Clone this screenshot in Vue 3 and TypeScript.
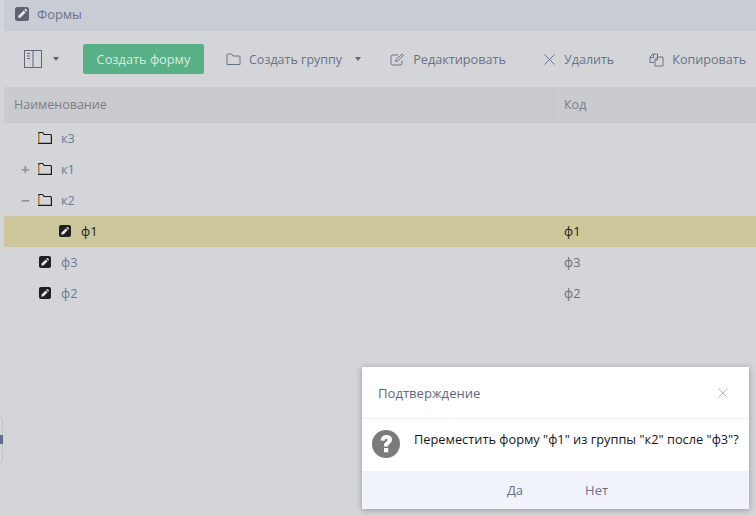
<template>
  <div class="page">
    <header class="title-bar">
      <span class="title-icon">
        <svg width="14" height="14" viewBox="0 0 14 14">
          <rect width="14" height="14" rx="2.500" fill="#5f6475" />
          <path d="M3 11l.6-2.600 5-5 2 2-5 5z" fill="#e4e6ea" />
          <path d="M9.300 2.700l.7-.7q.5-.4 1 0l1 1q.4.500 0 1l-.7.7z" fill="#e4e6ea" />
        </svg>
      </span>
      <span class="title-text">Формы</span>
    </header>

    <div class="toolbar">
      <button class="tool view-btn">
        <svg width="19" height="18" viewBox="0 0 19 18" fill="none" stroke="#60657a">
          <rect x="1.500" y="0.500" width="17" height="17" />
          <path d="M10 0.500v17M4 3.500h3M4 6h3M4 8.500h3" />
        </svg>
      </button>
      <span class="caret view-caret"></span>
      <button class="create-btn">{{ createLabel }}</button>
      <button v-for="item in actions" :key="item.label" class="tool" :class="item.cls">
        <svg width="15" height="15" viewBox="0 0 15 15" fill="none" stroke="#6c7285" stroke-width="1">
          <path v-for="d in item.paths" :key="d" :d="d" />
        </svg>
        <span>{{ item.label }}</span>
        <span v-if="item.caret" class="caret"></span>
      </button>
    </div>

    <div class="table-head">
      <div class="col-name">Наименование</div>
      <div class="col-code">Код</div>
    </div>

    <div class="rows">
      <div v-for="row in rows" :key="row.name" class="row" :class="{ selected: row.selected }">
        <div class="cell-name" :style="{ paddingLeft: row.indent + 'px' }">
          <span class="toggle">{{ row.toggle }}</span>
          <svg v-if="row.folder" class="node-icon" width="14" height="12" viewBox="0 0 14 12" fill="none">
            <path d="M.6 11.400V1.500q0-1 1-1h3l1.500 2h6.300q1 0 1 1v7.900z" stroke="#1a1b20" stroke-width="1.200" />
            <path d="M.6 11V1.500" stroke="#b8813a" stroke-width="1.200" />
          </svg>
          <svg v-else class="node-icon form-icon" width="12" height="12" viewBox="0 0 12 12">
            <rect width="12" height="12" rx="2" fill="#1e1f24" />
            <path d="M2.300 9.700l.5-2.400 3.900-3.900 1.900 1.900-3.900 3.900z" fill="#ece8da" />
            <path d="M7.300 2.800l.7-.6q.4-.3.8 0l1 1q.3.400 0 .8l-.6.7z" fill="#ece8da" />
          </svg>
          <span class="node-name">{{ row.name }}</span>
        </div>
        <div class="cell-code">{{ row.code }}</div>
      </div>
    </div>

    <div class="side-handle"></div>

    <div class="dialog">
      <div class="dialog-head">
        <span>Подтверждение</span>
        <svg width="10" height="10" viewBox="0 0 10 10" stroke="#b6bac4" fill="none">
          <path d="M.5 .5l9 9M9.500 .5l-9 9" />
        </svg>
      </div>
      <div class="dialog-body">
        <svg width="28" height="28" viewBox="0 0 28 28">
          <circle cx="14" cy="14" r="14" fill="#7b7b7b" />
          <path
            d="M8.500 10.500q.6-5.500 5.800-5.500 5.700 0 5.700 4.800 0 2.700-2.600 4.200-1.200.7-1.200 1.700v.8h-4.200v-1.300q0-2.300 2-3.500 1.600-.9 1.600-1.800 0-1.200-1.300-1.200-1.500 0-1.800 2zM12 18h4.200v4.200H12z"
            fill="#fff"
          />
        </svg>
        <span>{{ message }}</span>
      </div>
      <div class="dialog-foot">
        <button class="foot-btn">Да</button>
        <button class="foot-btn">Нет</button>
      </div>
    </div>
  </div>
</template>

<script setup lang="ts">
interface Action {
  label: string;
  cls: string;
  caret?: boolean;
  paths: string[];
}

interface Row {
  name: string;
  code: string;
  indent: number;
  toggle: string;
  folder: boolean;
  selected?: boolean;
}

const createLabel = "Создать форму";
const message = 'Переместить форму "ф1" из группы "к2" после "ф3"?';

const actions: Action[] = [
  {
    label: "Создать группу",
    cls: "a-group",
    caret: true,
    paths: ["M1 12.500V3q0-1 1-1h3.500l1.500 2h6q1 0 1 1v7.500z"],
  },
  {
    label: "Редактировать",
    cls: "a-edit",
    paths: ["M12 8.500v3q0 1.500-1.500 1.500h-8Q1 13 1 11.500v-7Q1 3 2.500 3H8", "M5.500 9.500l.6-2 6-5.500 1.400 1.400-5.900 5.600z"],
  },
  { label: "Удалить", cls: "a-del", paths: ["M2.500 2.500l10 10M12.500 2.500l-10 10"] },
  {
    label: "Копировать",
    cls: "a-copy",
    paths: ["M5 10.500H1V5l3-3h4.500v3", "M6 14V7.500L8.500 5H14v9z", "M4.500 2v3.500H1M8.500 5v3H6"],
  },
];

const rows: Row[] = [
  { name: "к3", code: "", indent: 17, toggle: "", folder: true },
  { name: "к1", code: "", indent: 17, toggle: "+", folder: true },
  { name: "к2", code: "", indent: 17, toggle: "−", folder: true },
  { name: "ф1", code: "ф1", indent: 37, toggle: "", folder: false, selected: true },
  { name: "ф3", code: "ф3", indent: 17, toggle: "", folder: false },
  { name: "ф2", code: "ф2", indent: 17, toggle: "", folder: false },
];
</script>

<style>
html,
body {
  margin: 0;
  background: #d3d5d9;
}
</style>

<style scoped>
.page {
  position: relative;
  width: 756px;
  height: 516px;
  overflow: hidden;
  padding-left: 4px;
  box-sizing: border-box;
  background: #d3d5d9;
  font-family: "Open Sans", "Noto Sans", sans-serif;
  font-size: 12.500px;
  color: #6c7285;
}

button {
  font: inherit;
  color: inherit;
  background: none;
  border: none;
  padding: 0;
}

.title-bar {
  height: 31px;
  box-sizing: border-box;
  display: flex;
  align-items: center;
  padding: 0 0 3px 11px;
  gap: 8px;
  background: #c8ccd5;
  font-size: 12.800px;
}

.title-icon {
  display: flex;
}

.title-text {
  margin-top: -1px;
}

.toolbar {
  height: 56px;
  display: flex;
  align-items: center;
  padding-left: 19px;
  white-space: nowrap;
}

.tool {
  display: flex;
  align-items: center;
  gap: 8px;
}

.view-btn {
  display: flex;
}

.caret {
  display: inline-block;
  width: 0;
  height: 0;
  border-left: 3.500px solid transparent;
  border-right: 3.500px solid transparent;
  border-top: 4px solid #5f6475;
  margin-left: 5px;
}

.view-caret {
  margin-left: 11px;
  margin-right: 1px;
}

.create-btn {
  width: 121px;
  height: 30px;
  margin-left: 23px;
  border-radius: 2px;
  background: #57b086;
  color: #d5ebe0;
  font-size: 12.800px;
}

.a-group {
  margin-left: 22px;
}

.a-edit {
  margin-left: 29px;
  font-size: 12.700px;
}

.a-del {
  margin-left: 36px;
  gap: 7px;
}

.a-copy {
  margin-left: 35px;
  font-size: 12.600px;
}

.table-head {
  height: 35px;
  display: flex;
  line-height: 35px;
  background: #cacbcf;
  border-bottom: 1px solid #c3c5c9;
  color: #7a7d86;
}

.col-name {
  width: 550px;
  padding-left: 10px;
  box-sizing: border-box;
  border-right: 1px solid #c3c5c9;
}

.col-code {
  padding-left: 10px;
}

.row {
  height: 31px;
  box-sizing: border-box;
  padding-bottom: 1px;
  display: flex;
  align-items: center;
  font-size: 12.800px;
}

.row.selected {
  background: #cfc79c;
  color: #1c1d22;
}

.cell-name {
  width: 550px;
  box-sizing: border-box;
  display: flex;
  align-items: center;
  color: #6e7a94;
}

.row.selected .cell-name {
  color: #1c1d22;
}

.toggle {
  width: 8px;
  margin-right: 9px;
  text-align: center;
  font-size: 15px;
  font-weight: 700;
  line-height: 15px;
  color: #8d91a0;
}

.node-icon {
  margin-right: 9px;
}

.form-icon {
  margin-left: 1px;
  margin-right: 10px;
}

.cell-code {
  padding-left: 10px;
  color: #6f6f76;
}

.row.selected .cell-code {
  color: #1c1d22;
}

.side-handle {
  position: absolute;
  left: -13px;
  top: 416px;
  width: 14px;
  height: 46px;
  border: 1px solid #c2c5cc;
  border-radius: 4px;
}

.side-handle::after {
  content: "";
  position: absolute;
  right: -1px;
  top: 18px;
  width: 3px;
  height: 9px;
  background: #5f6c90;
}

.dialog {
  position: absolute;
  left: 362px;
  top: 367px;
  width: 387px;
  height: 142px;
  display: flex;
  flex-direction: column;
  background: #fff;
  box-shadow: 0 1px 6px rgba(0, 0, 0, 0.3);
}

.dialog-head {
  height: 51px;
  display: flex;
  align-items: center;
  justify-content: space-between;
  padding: 0 21px 0 16px;
  border-bottom: 1px solid #eff1f6;
  font-size: 13.100px;
  color: #5f6780;
}

.dialog-body {
  flex: 1;
  display: flex;
  align-items: flex-start;
  gap: 14px;
  padding: 11px 0 0 10px;
  color: #16171b;
  font-size: 12.800px;
  white-space: nowrap;
}

.dialog-foot {
  height: 38px;
  box-sizing: border-box;
  padding-left: 4px;
  display: flex;
  align-items: center;
  justify-content: center;
  gap: 62px;
  background: #f0f3fa;
  color: #6c7285;
  font-size: 13px;
}
</style>
